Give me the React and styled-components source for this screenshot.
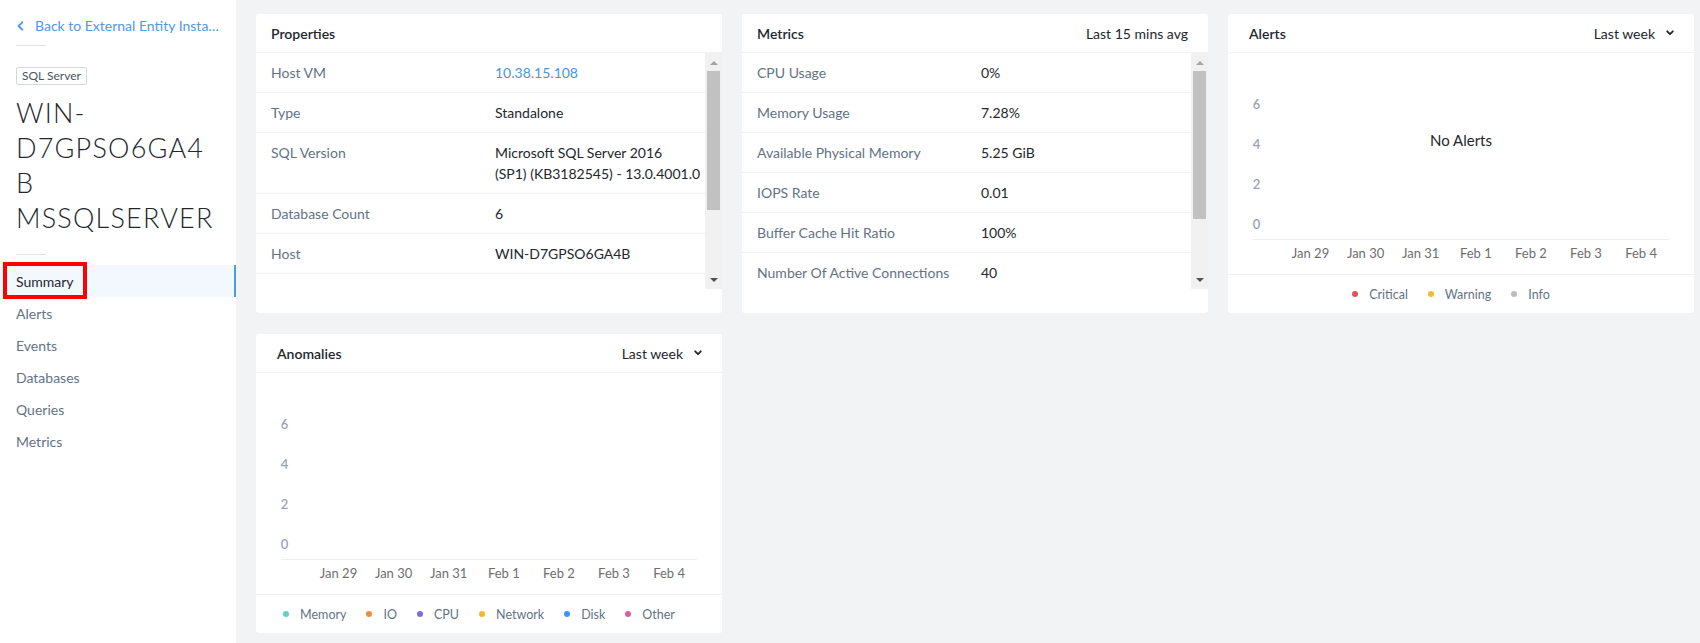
import React from 'react';
import styled, { createGlobalStyle } from 'styled-components';

const GlobalStyle = createGlobalStyle`
  html, body { margin: 0; padding: 0; }
  body {
    font-family: Lato, "Noto Sans", sans-serif;
    background: #f2f3f5;
    color: #22272e;
  }
  * { box-sizing: border-box; }
`;

const Page = styled.div`
  display: flex;
  width: 1700px;
  height: 643px;
  overflow: hidden;
  background: #f2f3f5;
`;

const Sidebar = styled.aside`
  width: 236px;
  flex: none;
  background: #fff;
  padding-top: 17px;
  display: flex;
  flex-direction: column;
`;

const SideInner = styled.div`
  padding: 0 16px;
`;

const BackLink = styled.a`
  display: flex;
  align-items: center;
  gap: 11px;
  height: 18px;
  font-size: 14px;
  line-height: 18px;
  color: #4f98ea;
  text-decoration: none;
  white-space: nowrap;
  overflow: hidden;
  svg { flex: none; margin-left: 1px; }
  span { overflow: hidden; text-overflow: ellipsis; }
`;

const ShortRule = styled.div`
  width: 30px;
  height: 1px;
  background: #dfe1e4;
  margin-top: ${(p) => p.$mt}px;
`;

const Tag = styled.span`
  display: inline-block;
  margin-top: 21px;
  height: 18px;
  padding: 0 5px;
  border: 1px solid #d4d7dc;
  border-radius: 2px;
  font-size: 12px;
  line-height: 16px;
  color: #4b5563;
`;

const EntityTitle = styled.h1`
  margin: 10px 0 0;
  width: 202px;
  font-size: 27px;
  letter-spacing: 1.2px;
  line-height: 35px;
  font-weight: 300;
  color: #22272e;
  overflow-wrap: anywhere;
`;

const Nav = styled.nav`
  margin-top: 10px;
  display: flex;
  flex-direction: column;
`;

const NavItem = styled.a`
  position: relative;
  display: flex;
  align-items: center;
  height: 32px;
  padding-left: 16px;
  font-size: 14px;
  color: ${(p) => (p.$active ? '#22272e' : '#627386')};
  background: ${(p) => (p.$active ? '#f3f8fe' : 'transparent')};
  border-right: 2px solid ${(p) => (p.$active ? '#4a9be8' : 'transparent')};
  text-decoration: none;
`;

const Highlight = styled.span`
  position: absolute;
  left: 3px;
  top: -3px;
  width: 84px;
  height: 37px;
  border: 4px solid #f00;
  pointer-events: none;
`;

const Main = styled.main`
  flex: 1;
  padding: 14px 6px 0 20px;
  display: grid;
  grid-template-columns: repeat(3, 466px);
  grid-auto-rows: 299px;
  column-gap: 20px;
  row-gap: 21px;
  align-content: start;
`;

const Card = styled.section`
  background: #fff;
  border-radius: 3px;
  display: flex;
  flex-direction: column;
  overflow: hidden;
  padding-bottom: ${(p) => p.$pb || 0}px;
`;

const CardHeader = styled.header`
  flex: none;
  height: 39px;
  display: flex;
  align-items: center;
  justify-content: space-between;
  padding: 0 20px 0 ${(p) => p.$inset}px;
  border-bottom: 1px solid #eff1f3;
`;

const CardTitle = styled.h2`
  margin: 0;
  font-size: 14px;
  font-weight: 600;
  color: #22272e;
`;

const HeaderNote = styled.span`
  font-size: 14px;
  color: #22272e;
`;

const Dropdown = styled.button`
  display: flex;
  align-items: center;
  gap: 11px;
  border: 0;
  background: none;
  padding: 0;
  font: inherit;
  font-size: 14px;
  color: #22272e;
`;

const ScrollBody = styled.div`
  height: 236px;
  flex: none;
  display: flex;
`;

const RowsPane = styled.div`
  flex: 1;
  min-width: 0;
  overflow: hidden;
`;

const ScrollTrack = styled.div`
  width: 17px;
  flex: none;
  background: #f1f1f1;
  display: flex;
  flex-direction: column;
`;

const ScrollArrow = styled.div`
  height: 17px;
  flex: none;
  display: flex;
  align-items: center;
  justify-content: center;
  padding-top: ${(p) => (p.$up ? 3 : 0)}px;
  padding-bottom: ${(p) => (p.$up ? 0 : 1)}px;
  &::before {
    content: '';
    width: 0;
    height: 0;
    border-left: 4px solid transparent;
    border-right: 4px solid transparent;
    ${(p) =>
      p.$up
        ? 'border-bottom: 4px solid #a3a3a3;'
        : 'border-top: 4px solid #505050;'}
  }
`;

const ThumbArea = styled.div`
  flex: 1;
  padding: 1px 2px 0;
`;

const Thumb = styled.div`
  height: ${(p) => p.$h}px;
  background: #c1c1c1;
`;

const Row = styled.div`
  display: grid;
  grid-template-columns: 224px 1fr;
  padding: 9px 0 9px 15px;
  line-height: 21px;
  font-size: 14px;
  border-bottom: 1px solid #eff1f3;
`;

const Label = styled.span`
  color: #627386;
`;

const Value = styled.span`
  color: ${(p) => (p.$link ? '#4a94e8' : '#22272e')};
`;

const ChartBody = styled.div`
  position: relative;
  height: 221px;
  flex: none;
  svg { display: block; }
`;

const EmptyNote = styled.div`
  position: absolute;
  left: 0;
  right: 0;
  top: 77px;
  text-align: center;
  font-size: 15px;
  line-height: 20px;
  color: #22272e;
`;

const Legend = styled.div`
  flex: 1;
  display: flex;
  align-items: center;
  justify-content: center;
  gap: 20px;
  padding-right: 20px;
  border-top: 1px solid #eff1f3;
`;

const LegendItem = styled.span`
  display: flex;
  align-items: center;
  gap: 11px;
  font-size: 12.5px;
  color: #627386;
  &::before {
    content: '';
    width: 6px;
    height: 6px;
    border-radius: 50%;
    background: ${(p) => p.$color};
  }
`;

const Chevron = () => (
  <svg width="8" height="6" viewBox="0 0 8 6">
    <path d="M1.2 1.3 L4 4.2 L6.8 1.3" fill="none" stroke="#22272e" strokeWidth="1.8" strokeLinecap="round" strokeLinejoin="round" />
  </svg>
);

const BackChevron = () => (
  <svg width="7" height="10" viewBox="0 0 7 10">
    <path d="M5.3 1.3 L1.6 5 L5.3 8.7" fill="none" stroke="#4f98ea" strokeWidth="1.9" strokeLinecap="round" strokeLinejoin="round" />
  </svg>
);

const DAYS = ['Jan 29', 'Jan 30', 'Jan 31', 'Feb 1', 'Feb 2', 'Feb 3', 'Feb 4'];
const TICKS = [6, 4, 2, 0];

const Chart = () => (
  <svg width="466" height="221" viewBox="0 0 466 221">
    {TICKS.map((t, i) => (
      <text key={t} x="28.5" y={51 + i * 40} textAnchor="middle" dominantBaseline="central" fontSize="13" fontWeight="600" fill="#9aa3b3">
        {t}
      </text>
    ))}
    <line x1="25" x2="441" y1="186.5" y2="186.5" stroke="#eceef1" strokeWidth="1" />
    {DAYS.map((d, i) => (
      <text key={d} x={82.5 + i * 55.1} y="200" textAnchor="middle" dominantBaseline="central" fontSize="13" fill="#6e6e6e">
        {d}
      </text>
    ))}
  </svg>
);

const properties = [
  ['Host VM', '10.38.15.108', true],
  ['Type', 'Standalone'],
  ['SQL Version', 'Microsoft SQL Server 2016 (SP1)\u00a0(KB3182545) - 13.0.4001.0'],
  ['Database Count', '6'],
  ['Host', 'WIN-D7GPSO6GA4B'],
];

const metrics = [
  ['CPU Usage', '0%'],
  ['Memory Usage', '7.28%'],
  ['Available Physical Memory', '5.25 GiB'],
  ['IOPS Rate', '0.01'],
  ['Buffer Cache Hit Ratio', '100%'],
  ['Number Of Active Connections', '40'],
];

const navItems = ['Summary', 'Alerts', 'Events', 'Databases', 'Queries', 'Metrics'];

const Scrollbar = ({ thumb }) => (
  <ScrollTrack>
    <ScrollArrow $up />
    <ThumbArea>
      <Thumb $h={thumb} />
    </ThumbArea>
    <ScrollArrow />
  </ScrollTrack>
);

const KeyValueCard = ({ title, note, rows, thumb }) => (
  <Card $pb={24}>
    <CardHeader $inset={15}>
      <CardTitle>{title}</CardTitle>
      {note && <HeaderNote>{note}</HeaderNote>}
    </CardHeader>
    <ScrollBody>
      <RowsPane>
        {rows.map(([k, v, link]) => (
          <Row key={k}>
            <Label>{k}</Label>
            <Value $link={link}>{v}</Value>
          </Row>
        ))}
      </RowsPane>
      <Scrollbar thumb={thumb} />
    </ScrollBody>
  </Card>
);

const ChartCard = ({ title, empty, legend }) => (
  <Card>
    <CardHeader $inset={21}>
      <CardTitle>{title}</CardTitle>
      <Dropdown>
        Last week <Chevron />
      </Dropdown>
    </CardHeader>
    <ChartBody>
      <Chart />
      {empty && <EmptyNote>{empty}</EmptyNote>}
    </ChartBody>
    <Legend>
      {legend.map(([name, color]) => (
        <LegendItem key={name} $color={color}>
          {name}
        </LegendItem>
      ))}
    </Legend>
  </Card>
);

export default function App() {
  return (
    <>
      <GlobalStyle />
      <Page>
        <Sidebar>
          <SideInner>
            <BackLink href="#">
              <BackChevron />
              <span>Back to External Entity Instances</span>
            </BackLink>
            <ShortRule $mt={10} />
            <Tag>SQL Server</Tag>
            <EntityTitle>WIN-D7GPSO6GA4B MSSQLSERVER</EntityTitle>
            <ShortRule $mt={19} />
          </SideInner>
          <Nav>
            {navItems.map((n, i) => (
              <NavItem key={n} href="#" $active={i === 0}>
                {n}
                {i === 0 && <Highlight />}
              </NavItem>
            ))}
          </Nav>
        </Sidebar>
        <Main>
          <KeyValueCard title="Properties" rows={properties} thumb={139} />
          <KeyValueCard title="Metrics" note="Last 15 mins avg" rows={metrics} thumb={148} />
          <ChartCard
            title="Alerts"
            empty="No Alerts"
            legend={[
              ['Critical', '#e35454'],
              ['Warning', '#f6b92b'],
              ['Info', '#b9bdc8'],
            ]}
          />
          <ChartCard
            title="Anomalies"
            legend={[
              ['Memory', '#5fd3c5'],
              ['IO', '#f08c3a'],
              ['CPU', '#7d6be8'],
              ['Network', '#f6b92b'],
              ['Disk', '#3e96f0'],
              ['Other', '#e05ca8'],
            ]}
          />
        </Main>
      </Page>
    </>
  );
}
